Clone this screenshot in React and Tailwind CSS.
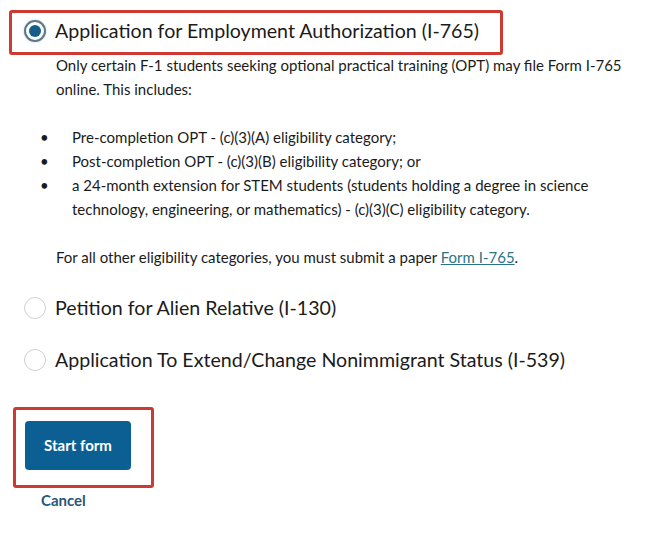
import React from 'react';

const FONT = { fontFamily: 'Lato, "Noto Sans", sans-serif' };

function Radio({ checked }) {
  if (checked) {
    return (
      <span className="w-[22px] h-[22px] shrink-0 rounded-full border-[2px] border-[#5d7a8c] bg-white flex items-center justify-center shadow-[0_0_2px_rgba(0,0,0,0.25)]">
        <span className="w-[12px] h-[12px] rounded-full bg-[#155e8c]" />
      </span>
    );
  }
  return <span className="w-[22px] h-[22px] shrink-0 rounded-full border border-[#d0d0d0] bg-white" />;
}

const BULLETS = [
  'Pre-completion OPT - (c)(3)(A) eligibility category;',
  'Post-completion OPT - (c)(3)(B) eligibility category; or',
  'a 24-month extension for STEM students (students holding a degree in science technology, engineering, or mathematics) - (c)(3)(C) eligibility category.',
];

export default function App() {
  return (
    <div className="w-[650px] h-[536px] bg-white pt-[10px] pl-[9px] text-[#1b1b1b] overflow-hidden" style={FONT}>
      {/* selected option */}
      <div className="w-[494px] h-[45px] border-[3px] border-[#cc3a32] rounded-[3px] flex items-center pl-[12px] pb-[3px] gap-[9px]">
        <Radio checked />
        <span className="text-[19.6px] leading-[26px]">Application for Employment Authorization (I-765)</span>
      </div>

      <div className="pl-[47px] pr-[20px] text-[15px] leading-[24px] -mt-[2px]">
        <p>Only certain F-1 students seeking optional practical training (OPT) may file Form I-765 online. This includes:</p>
        <ul className="mt-[24px] -ml-[16px] max-w-[562px]">
          {BULLETS.map(b => (
            <li key={b} className="flex">
              <span className="w-[32px] shrink-0">•</span>
              <span>{b}</span>
            </li>
          ))}
        </ul>
        <p className="mt-[24px]">
          For all other eligibility categories, you must submit a paper{' '}
          <a href="#" className="text-[#2b7387] underline">Form I-765</a>.
        </p>
      </div>

      <div className="mt-[24px] pl-[15px] flex items-center gap-[9px] h-[30px]">
        <Radio />
        <span className="text-[19.6px]">Petition for Alien Relative (I-130)</span>
      </div>
      <div className="mt-[22px] pl-[15px] flex items-center gap-[9px] h-[30px]">
        <Radio />
        <span className="text-[19.6px]">Application To Extend/Change Nonimmigrant Status (I-539)</span>
      </div>

      <div className="mt-[32px] ml-[4px] w-[141px] h-[81px] border-[3px] border-[#cc3a32] rounded-[3px] pl-[9px] pt-[11px]">
        <button className="w-[106px] h-[49px] rounded-[4px] bg-[#0b5f92] text-white font-bold text-[15px]">Start form</button>
      </div>
      <div className="ml-[32px] mt-[1px] text-[15px] font-bold text-[#2b5676]">Cancel</div>
    </div>
  );
}
